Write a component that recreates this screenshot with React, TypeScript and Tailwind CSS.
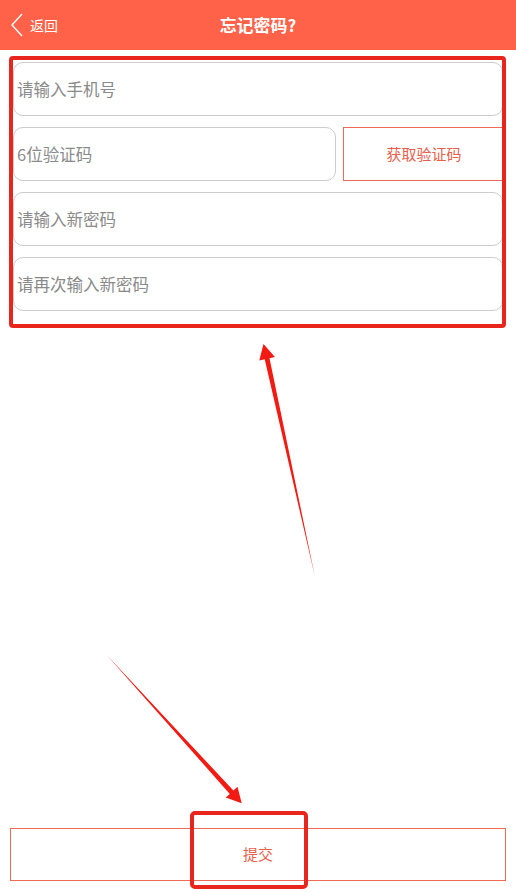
import { useState } from "react";

const fields = ["请输入新密码", "请再次输入新密码"];

export default function App() {
  const [phone, setPhone] = useState("");
  const [code, setCode] = useState("");

  return (
    <div
      className="relative flex min-h-[892px] w-full flex-col bg-white"
      style={{ fontFamily: '"Noto Sans CJK SC", "Noto Sans", sans-serif' }}
    >
      {/* header */}
      <div className="relative flex h-[50px] items-center justify-center bg-[#ff6249]">
        <button className="absolute left-[10px] top-0 flex h-full items-center gap-[6px] text-white">
          <svg width="14" height="24" viewBox="0 0 14 24" fill="none">
            <path d="M12 1 L2 12 L12 23" stroke="white" strokeWidth="1.4" />
          </svg>
          <span className="text-[14px] leading-none">返回</span>
        </button>
        <h1 className="text-[17px] font-semibold text-white">忘记密码?</h1>
      </div>

      {/* form */}
      <div className="mt-[12px] flex flex-col gap-[11px] px-[13px]">
        <input
          value={phone}
          onChange={(e) => setPhone(e.target.value)}
          placeholder="请输入手机号"
          className="h-[54px] w-full rounded-[10px] border border-[#cccccc] px-[3px] text-[16.5px] outline-none placeholder:text-[#8a8a8a]"
        />
        <div className="-mr-[2px] flex gap-[7px]">
          <input
            value={code}
            onChange={(e) => setCode(e.target.value)}
            placeholder="6位验证码"
            className="h-[54px] min-w-0 flex-1 rounded-[10px] border border-[#cccccc] px-[3px] text-[16.5px] outline-none placeholder:text-[#8a8a8a]"
          />
          <button className="h-[54px] w-[162px] border-[1.5px] border-[#ee6a58] text-[15px] text-[#e8604c]">
            获取验证码
          </button>
        </div>
        {fields.map((f) => (
          <input
            key={f}
            type="password"
            placeholder={f}
            className="h-[54px] w-full rounded-[10px] border border-[#cccccc] px-[3px] text-[16.5px] outline-none placeholder:text-[#8a8a8a]"
          />
        ))}
      </div>

      {/* submit */}
      <div className="mt-auto mb-[11px] px-[10px]">
        <button className="h-[53px] w-full border border-[#f06a55] text-[15px] text-[#e8604c]">
          提交
        </button>
      </div>

      {/* annotations */}
      <div className="pointer-events-none absolute left-[9px] top-[56px] h-[272px] w-[497px] rounded-[4px] border-[4px] border-[#e8261e]" />
      <div className="pointer-events-none absolute left-[190px] top-[811px] h-[78px] w-[118px] rounded-[5px] border-[4px] border-[#e8261e]" />
      <svg
        className="pointer-events-none absolute left-0 top-0"
        width="516"
        height="892"
        viewBox="0 0 516 892"
      >
        <polygon
          points="315,577 269.5,358.2 274.9,357 263.5,344 259.3,360.4 264.7,359.2"
          fill="#f21a12"
        />
        <polygon
          points="106.7,655 233.4,790.5 237.5,786.8 241.7,803.3 225.7,797.6 229.8,793.9"
          fill="#f21a12"
        />
      </svg>
    </div>
  );
}
